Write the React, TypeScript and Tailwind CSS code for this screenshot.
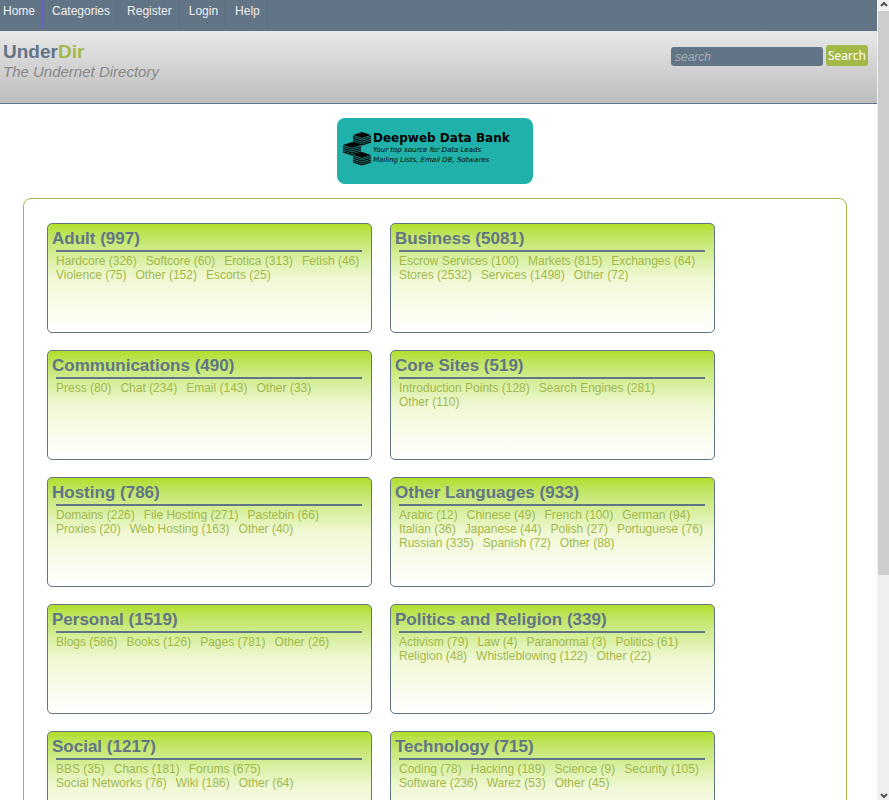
import React, { useState } from 'react';

interface Category {
    name: string;
    total: number;
    links: [string, number][];
}

const menu = ['Home', 'Categories', 'Register', 'Login', 'Help'];

const categories: Category[] = [
    { name: 'Adult', total: 997, links: [['Hardcore', 326], ['Softcore', 60], ['Erotica', 313], ['Fetish', 46], ['Violence', 75], ['Other', 152], ['Escorts', 25]] },
    { name: 'Business', total: 5081, links: [['Escrow Services', 100], ['Markets', 815], ['Exchanges', 64], ['Stores', 2532], ['Services', 1498], ['Other', 72]] },
    { name: 'Communications', total: 490, links: [['Press', 80], ['Chat', 234], ['Email', 143], ['Other', 33]] },
    { name: 'Core Sites', total: 519, links: [['Introduction Points', 128], ['Search Engines', 281], ['Other', 110]] },
    { name: 'Hosting', total: 786, links: [['Domains', 226], ['File Hosting', 271], ['Pastebin', 66], ['Proxies', 20], ['Web Hosting', 163], ['Other', 40]] },
    { name: 'Other Languages', total: 933, links: [['Arabic', 12], ['Chinese', 49], ['French', 100], ['German', 94], ['Italian', 36], ['Japanese', 44], ['Polish', 27], ['Portuguese', 76], ['Russian', 335], ['Spanish', 72], ['Other', 88]] },
    { name: 'Personal', total: 1519, links: [['Blogs', 586], ['Books', 126], ['Pages', 781], ['Other', 26]] },
    { name: 'Politics and Religion', total: 339, links: [['Activism', 79], ['Law', 4], ['Paranormal', 3], ['Politics', 61], ['Religion', 48], ['Whistleblowing', 122], ['Other', 22]] },
    { name: 'Social', total: 1217, links: [['BBS', 35], ['Chans', 181], ['Forums', 675], ['Social Networks', 76], ['Wiki', 186], ['Other', 64]] },
    { name: 'Technology', total: 715, links: [['Coding', 78], ['Hacking', 189], ['Science', 9], ['Security', 105], ['Software', 236], ['Warez', 53], ['Other', 45]] },
];

// One pile of sheets: a solid top with the edges of the sheets under it
function Stack({ x, y }: { x: number; y: number }) {
    return (
        <g transform={`translate(${x} ${y})`}>
            <path d="M0 3 L9 0 L18 3 L9 6 Z" fill="#000" />
            {[0, 1, 2, 3].map((i) => (
                <path
                    key={i}
                    d={`M0 ${4.2 + i * 1.9} L9 ${7.2 + i * 1.9} L18 ${4.2 + i * 1.9}`}
                    fill="none"
                    stroke="#000"
                    strokeWidth="1.2"
                />
            ))}
        </g>
    );
}

function Banner() {
    return (
        <a href="#" className="flex h-[66px] w-[196px] items-start rounded-lg bg-[#20b2aa] pt-3.5 pl-[5px] font-['DejaVu_Sans',sans-serif] text-black">
            <svg width="31" height="35" viewBox="0 0 31 35" className="shrink-0" aria-hidden="true">
                <Stack x={11} y={0} />
                <Stack x={1} y={10} />
                <Stack x={11} y={20} />
            </svg>
            <span className="block whitespace-nowrap">
                <span className="block text-[12px] leading-[13px] font-bold">Deepweb Data Bank</span>
                <span className="block text-[7px] leading-[10px] italic">Your top source for Data Leads</span>
                <span className="block text-[7px] leading-[10px] italic">Mailing Lists, Email DB, Sotwares</span>
            </span>
        </a>
    );
}

function CategoryCard({ category }: { category: Category }) {
    return (
        <section className="h-[110px] w-[325px] rounded-[5px] border border-[#627587] bg-linear-to-b from-[#b2de26] via-[#f0f8d3] via-50% to-white">
            <h2 className="px-1 pt-1 text-[17px] leading-[22px] font-bold text-[#627587]">
                <a href="#">{category.name} ({category.total})</a>
            </h2>
            <ul className="mr-[9px] ml-2 flex flex-wrap gap-x-[9px] border-t-2 border-[#627587] pt-0.5 text-[12px] leading-[14px] text-[#a2b94a]">
                {category.links.map(([name, count]) => (
                    <li key={name}>
                        <a href="#">{name} ({count})</a>
                    </li>
                ))}
            </ul>
        </section>
    );
}

function ScrollBar() {
    return (
        <div className="flex w-3 shrink-0 flex-col items-center bg-[#f0f0f0] pl-px" aria-hidden="true">
            <svg width="11" height="11" viewBox="0 0 11 11">
                <path d="M3 6 L6 3 L9 6" fill="none" stroke="#505050" strokeWidth="2" />
            </svg>
            <div className="w-full flex-[564] bg-[#cdcdcd]" />
            <div className="flex-[214]" />
            <svg width="11" height="11" viewBox="0 0 11 11">
                <path d="M3 5 L6 8 L9 5" fill="none" stroke="#505050" strokeWidth="2" />
            </svg>
        </div>
    );
}

export default function App() {
    const [query, setQuery] = useState('');

    return (
        <div className="flex h-screen overflow-hidden bg-white font-['Liberation_Sans',Arial,sans-serif]">
            <div className="min-w-0 flex-1 overflow-hidden">
                <nav className="h-[31px] bg-[#627587]">
                    <ul className="flex text-[12px] text-[#eeeeee]">
                        {menu.map((item) => (
                            <li key={item} className="h-7 border-r border-[#6a5acd] pr-[7px] pl-[9px] leading-[23px] first:pl-[3px]">
                                <a href="#">{item}</a>
                            </li>
                        ))}
                    </ul>
                </nav>

                <header className="flex h-[73px] items-start justify-between border-b border-[#627587] bg-linear-to-b from-[#e8e8e8] to-[#bdbdbd] pr-[9px] pl-[3px]">
                    <div className="pt-[10px]">
                        <h1 className="text-[19px] leading-[22px] font-bold text-[#627587]">
                            Under<span className="text-[#a2b94a]">Dir</span>
                        </h1>
                        <p className="text-[15px] leading-[18px] text-[#888888] italic">The Undernet Directory</p>
                    </div>
                    <form className="flex items-end gap-[3px] pt-3.5" onSubmit={(e) => e.preventDefault()}>
                        <input
                            type="text"
                            aria-label="search"
                            placeholder="search"
                            value={query}
                            onChange={(e) => setQuery(e.target.value)}
                            className="h-[19px] w-[152px] rounded-[3px] bg-[#627587] px-1 text-[12px] text-white italic placeholder:text-[#a5afb8]"
                        />
                        <button type="submit" className="h-[21px] rounded-[3px] bg-[#a2b94a] px-0.5 font-['Noto_Sans',sans-serif] text-[12px] leading-[21px] text-white">
                            Search
                        </button>
                    </form>
                </header>

                <main className="flex flex-col pr-[30px] pl-[23px]">
                    <div className="flex justify-center pt-3.5 pb-3.5">
                        <Banner />
                    </div>
                    <div className="flex flex-wrap gap-x-[18px] gap-y-[17px] rounded-[8px] border border-[#a2b94a] px-[23px] py-6">
                        {categories.map((category) => (
                            <CategoryCard key={category.name} category={category} />
                        ))}
                    </div>
                </main>
            </div>
            <ScrollBar />
        </div>
    );
}
